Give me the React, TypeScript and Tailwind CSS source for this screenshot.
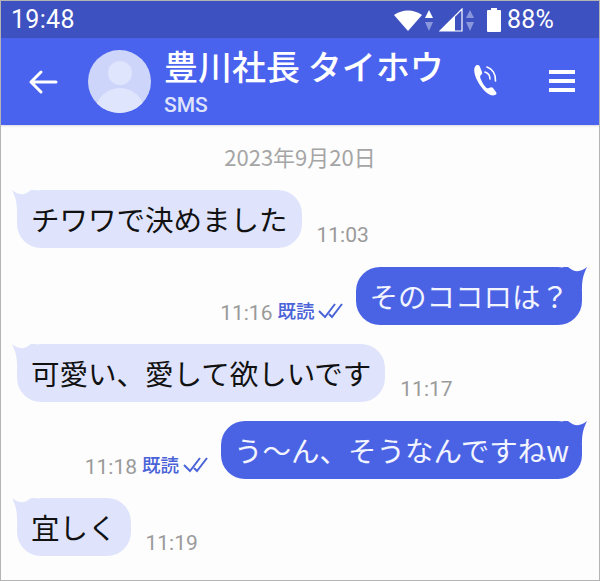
const font = { fontFamily: '"Noto Sans CJK JP", sans-serif' };

function Tail({ side, color }: { side: "left" | "right"; color: string }) {
  return side === "left" ? (
    <svg className="absolute left-[-5px] top-0" width="30" height="22" viewBox="0 0 30 22">
      <path d="M0 0 C6 5 12 6 19 0 L24 0 L24 22 L5 22 C5 14 4 8 0 0Z" fill={color} />
    </svg>
  ) : (
    <svg className="absolute right-[-5px] top-0" width="30" height="22" viewBox="0 0 30 22">
      <path d="M30 0 C24 5 18 6 11 0 L6 0 L6 22 L25 22 C25 14 26 8 30 0Z" fill={color} />
    </svg>
  );
}

function Left({ text, time }: { text: string; time: string }) {
  return (
    <div className="flex items-end pl-4">
      <div className="relative h-[58px] rounded-[24px] bg-[#dfe4fc] px-[14px] flex items-center">
        <Tail side="left" color="#dfe4fc" />
        <span className="relative text-[28.5px] leading-none text-[#111111] whitespace-nowrap" style={font}>{text}</span>
      </div>
      <span className="ml-[15px] text-[21px] leading-[26px] text-[#9a9a9a] font-['Roboto']">{time}</span>
    </div>
  );
}

function Right({ text, time }: { text: string; time: string }) {
  return (
    <div className="flex items-end justify-end pr-[17px]">
      <span className="text-[21px] leading-[24px] text-[#9a9a9a] font-['Roboto']">{time}</span>
      <span className="ml-[5px] mb-[3px] text-[18.5px] leading-[24px] font-medium text-[#4a63d8]" style={font}>既読</span>
      <svg className="ml-[4px] mb-[6px]" width="26" height="17" viewBox="0 0 26 17" fill="none" stroke="#4a63d8" strokeWidth="2">
        <path d="M1 9 L7 15 L17 2" />
        <path d="M11 12 L14 15 L24 2" />
      </svg>
      <div className="relative ml-[12px] h-[58px] rounded-[24px] bg-[#4a63e4] px-[13px] flex items-center">
        <Tail side="right" color="#4a63e4" />
        <span className="relative text-[28.5px] leading-none text-[#f2f4ff] whitespace-nowrap" style={font}>{text}</span>
      </div>
    </div>
  );
}

export default function App() {
  return (
    <div className="w-[600px] h-[581px] border border-[#b4b4b4] bg-[#fdfdfd] overflow-hidden flex flex-col">
      <div className="h-[37px] bg-[#3d51c0] flex items-center justify-between pl-[10px] pr-[45px] text-white text-[25px] font-['Roboto']">
        <span className="tracking-[0.3px]">19:48</span>
        <div className="flex items-center">
          <svg width="29" height="24" viewBox="0 0 29 24" fill="white">
            <path d="M0 7 C8 1 20 1 28 7 L14 23Z" />
          </svg>
          <svg className="ml-[1px]" width="10" height="22" viewBox="0 0 10 22">
            <path d="M5 1 L9 9 H1Z" fill="white" />
            <path d="M5 22 L9 13 H1Z" fill="#8a97dd" />
          </svg>
          <svg className="ml-[5px]" width="24" height="24" viewBox="0 0 24 24">
            <path d="M1 23 L23 1 V23Z" fill="none" stroke="white" strokeWidth="1.2" />
            <path d="M1 23 L16 8 V23Z" fill="white" />
          </svg>
          <svg className="ml-[2px]" width="10" height="22" viewBox="0 0 10 22">
            <path d="M5 1 L9 9 H1Z" fill="#8a97dd" />
            <path d="M5 22 L9 13 H1Z" fill="#8a97dd" />
          </svg>
          <svg className="ml-[11px]" width="16" height="26" viewBox="0 0 16 26">
            <path d="M5 1 H11 V3 H14 Q15 3 15 4 V24 Q15 25 14 25 H2 Q1 25 1 24 V4 Q1 3 2 3 H5Z" fill="white" />
          </svg>
          <span className="ml-[5px] tracking-[0.2px]">88%</span>
        </div>
      </div>
      <div className="h-[87px] bg-[#4a63ee] flex items-center pl-[27px] pr-[24px] shadow-[0_1px_2px_rgba(0,0,0,0.15)]">
        <svg width="30" height="26" viewBox="0 0 30 26" fill="none" stroke="white" strokeWidth="3" strokeLinecap="round" strokeLinejoin="round">
          <path d="M28 13 H3 M13 3 L3 13 L13 23" />
        </svg>
        <svg className="ml-[30px]" width="63" height="63" viewBox="0 0 63 63">
          <defs>
            <clipPath id="c"><circle cx="31.5" cy="31.5" r="31.5" /></clipPath>
          </defs>
          <g clipPath="url(#c)">
            <rect width="63" height="63" fill="#cdd6fa" />
            <circle cx="32" cy="23" r="12" fill="#dfe5fc" />
            <ellipse cx="32" cy="63" rx="25" ry="25" fill="#dfe5fc" />
          </g>
        </svg>
        <div className="ml-[13px] flex-1 flex flex-col">
          <span className="text-[34px] leading-[40px] text-white font-medium whitespace-nowrap" style={font}>豊川社長 タイホウ</span>
          <span className="text-[21px] leading-[24px] mt-[7px] text-[#dfe4fb] font-medium font-['Roboto']">SMS</span>
        </div>
        <svg className="mb-[4px]" width="28" height="32" viewBox="0 0 28 32" fill="none">
          <path d="M5 1.500 C7 0.500 8 1 9 3 L11 8 C11.500 9.500 11 10 9.500 11.500 C9 12 9 13 9.500 14.500 C11 18 12.500 21 15 23.500 C16 24.500 17 24.500 18 24 C20 23 21 23 22 24 L25 28 C26 29.500 25.500 30.500 24 31 C21 32 19 31 16 29 C10 24 5 16 3.500 9 C3 6 3 3 5 1.500Z" fill="white" />
          <path d="M14 8 C17 9 19 12 19 15 M16 3 C21 4.500 25 10 24.500 17" stroke="white" strokeWidth="1.600" strokeLinecap="round" />
        </svg>
        <div className="ml-[50px] mb-[2px] w-[26px] flex flex-col gap-[5px]">
          <div className="h-[4px] bg-white" />
          <div className="h-[4px] bg-white" />
          <div className="h-[4px] bg-white" />
        </div>
      </div>
      <div className="flex-1 flex flex-col">
        <div className="mt-[18px] text-center text-[22px] leading-[26px] text-[#a5a5a5]" style={font}>2023年9月20日</div>
        <div className="mt-[21px] flex flex-col gap-[19px]">
          <Left text="チワワで決めました" time="11:03" />
          <Right text="そのココロは？" time="11:16" />
          <Left text="可愛い、愛して欲しいです" time="11:17" />
          <Right text="う～ん、そうなんですねw" time="11:18" />
          <Left text="宜しく" time="11:19" />
        </div>
      </div>
    </div>
  );
}
